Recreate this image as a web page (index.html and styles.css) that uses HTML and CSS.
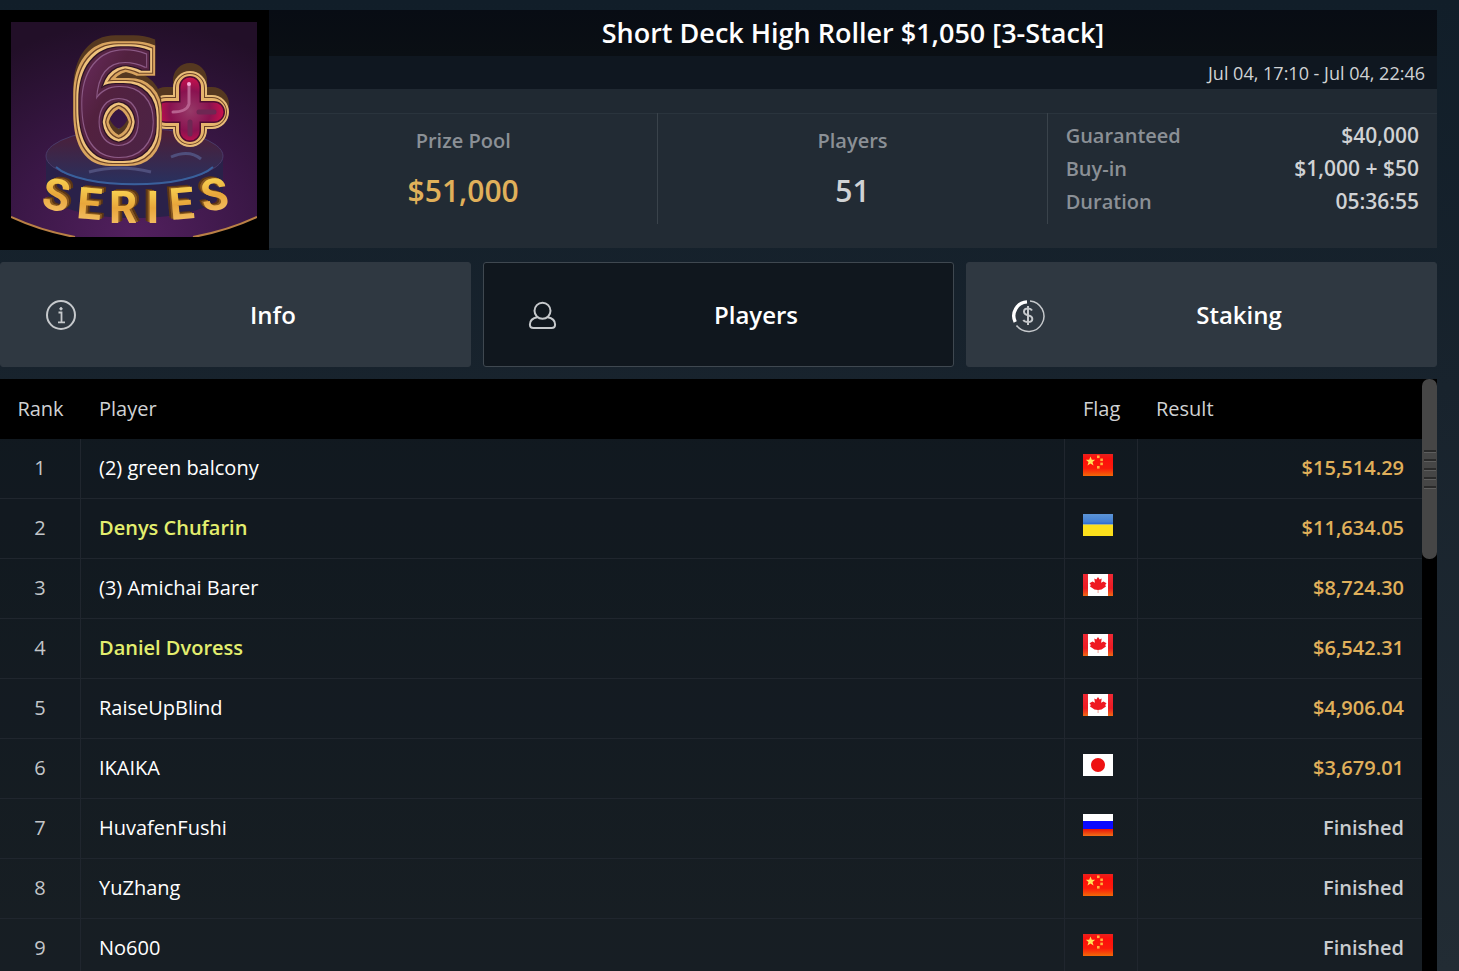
FILE: index.html
```html
<!DOCTYPE html>
<html lang="en">
<head>
    <meta charset="UTF-8">
    <meta name="viewport" content="width=device-width, initial-scale=1.0">
    <title>Short Deck High Roller</title>
    <link rel="stylesheet" href="styles.css">
</head>
<body>
    <!-- Shared flag drawings -->
    <svg class="defs" width="0" height="0" aria-hidden="true">
        <defs>
            <linearGradient id="cnRed" x1="0" y1="0" x2="0" y2="1">
                <stop offset="0" stop-color="#e8221c"/>
                <stop offset="0.2" stop-color="#fd0f0c"/>
                <stop offset="0.65" stop-color="#fc1a0a"/>
                <stop offset="1" stop-color="#f06a08"/>
            </linearGradient>
            <linearGradient id="caRed" x1="0" y1="0" x2="0" y2="1">
                <stop offset="0" stop-color="#ee2a35"/>
                <stop offset="0.65" stop-color="#ee1a22"/>
                <stop offset="1" stop-color="#ee6a14"/>
            </linearGradient>
            <linearGradient id="uaBlue" x1="0" y1="0" x2="0" y2="1">
                <stop offset="0" stop-color="#5c94d6"/>
                <stop offset="0.7" stop-color="#4380d4"/>
                <stop offset="1" stop-color="#1f5fd0"/>
            </linearGradient>
            <linearGradient id="ruRed" x1="0" y1="0" x2="0" y2="1">
                <stop offset="0" stop-color="#e81208"/>
                <stop offset="1" stop-color="#f07018"/>
            </linearGradient>
            <symbol id="flag-cn" viewBox="0 0 30 22">
                <rect width="30" height="22" fill="url(#cnRed)"/>
                <path d="M7.500 2.500l1.300 3.300h3.400L9.500 8l1 3.500-3-2-3 2 1-3.500L2.800 5.800h3.400z" fill="#ffe35a"/>
                <g fill="#ffb43c">
                    <rect x="14" y="1.500" width="2.600" height="2.600"/>
                    <rect x="17.300" y="4.500" width="2.600" height="2.600"/>
                    <rect x="17.300" y="8.600" width="2.600" height="2.600"/>
                    <rect x="14" y="12" width="2.600" height="2.600"/>
                </g>
            </symbol>
            <symbol id="flag-ua" viewBox="0 0 30 22">
                <rect width="30" height="11" fill="url(#uaBlue)"/>
                <rect y="11" width="30" height="11" fill="#fbdf1c"/>
                <rect y="10" width="30" height="1" fill="#a9b58c"/>
            </symbol>
            <symbol id="flag-ca" viewBox="0 0 30 22">
                <rect width="30" height="22" fill="#fff"/>
                <rect width="5" height="22" fill="url(#caRed)"/>
                <rect x="25" width="5" height="22" fill="url(#caRed)"/>
                <path d="M15 3l1.700 2.500 2-1-.6 4.200 2.400-1.200 3 1.700-1.300 1.900.8 1.300-4.500 3-3.500.6-3.500-.6-4.500-3 .8-1.300-1.300-1.900 3-1.700 2.400 1.200-.6-4.200 2 1z" fill="#ee1822"/>
                <rect x="14.500" y="16" width="1.200" height="3" fill="#f7b0a8"/>
            </symbol>
            <symbol id="flag-jp" viewBox="0 0 30 22">
                <rect width="30" height="22" fill="#fff"/>
                <circle cx="15" cy="11" r="7" fill="#ee1111"/>
            </symbol>
            <symbol id="flag-ru" viewBox="0 0 30 22">
                <rect width="30" height="8" fill="#fff"/>
                <rect y="7" width="30" height="8" fill="#0a0aff"/>
                <rect y="15" width="30" height="7" fill="url(#ruRed)"/>
            </symbol>
        </defs>
    </svg>

    <header class="event">
        <div class="event-logo">
            <svg viewBox="0 0 246 215" role="img" aria-label="6+ Series">
                <defs>
                    <radialGradient id="bg" cx="0.5" cy="1" r="1">
                        <stop offset="0" stop-color="#52205e"/>
                        <stop offset="0.5" stop-color="#3a1746"/>
                        <stop offset="1" stop-color="#220f28"/>
                    </radialGradient>
                    <linearGradient id="gold" x1="0" y1="0" x2="0" y2="1">
                        <stop offset="0" stop-color="#ffe45c"/>
                        <stop offset="0.5" stop-color="#e8a63a"/>
                        <stop offset="1" stop-color="#f8c877"/>
                    </linearGradient>
                    <linearGradient id="face" x1="0" y1="0" x2="1" y2="1">
                        <stop offset="0" stop-color="#74306c"/>
                        <stop offset="0.4" stop-color="#52213f"/>
                        <stop offset="1" stop-color="#4a2448"/>
                    </linearGradient>
                    <linearGradient id="top" x1="0" y1="0" x2="0" y2="1">
                        <stop offset="0" stop-color="#4f1d35"/>
                        <stop offset="1" stop-color="#28315f"/>
                    </linearGradient>
                    <radialGradient id="ruby" gradientUnits="userSpaceOnUse" cx="179" cy="89" r="34">
                        <stop offset="0" stop-color="#963a68"/>
                        <stop offset="0.6" stop-color="#8a1250"/>
                        <stop offset="1" stop-color="#cc0f4c"/>
                    </radialGradient>
                    <!-- Gold rims and a block of depth round the number -->
                    <filter id="rims" filterUnits="userSpaceOnUse" x="0" y="0" width="246" height="215" color-interpolation-filters="sRGB">
                        <feMorphology in="SourceAlpha" operator="dilate" radius="9" result="m9"/>
                        <feMorphology in="SourceAlpha" operator="dilate" radius="7" result="m7"/>
                        <feMorphology in="SourceAlpha" operator="dilate" radius="6" result="m6"/>
                        <feMorphology in="SourceAlpha" operator="dilate" radius="4" result="m4"/>
                        <feMorphology in="SourceAlpha" operator="dilate" radius="3" result="m3"/>
                        <feMorphology in="SourceAlpha" operator="dilate" radius="1" result="m1"/>
                        <feOffset in="m9" dy="-2" result="d1"/>
                        <feOffset in="m9" dy="-4" result="d2"/>
                        <feOffset in="m9" dy="-6" result="d3"/>
                        <feMerge result="depth">
                            <feMergeNode in="d3"/>
                            <feMergeNode in="d2"/>
                            <feMergeNode in="d1"/>
                        </feMerge>
                        <feFlood flood-color="#553820"/>
                        <feComposite in2="depth" operator="in" result="c0"/>
                        <feFlood flood-color="#d9a45f"/>
                        <feComposite in2="m9" operator="in" result="c9"/>
                        <feFlood flood-color="#6b4326"/>
                        <feComposite in2="m7" operator="in" result="c7"/>
                        <feFlood flood-color="#efc27c"/>
                        <feComposite in2="m6" operator="in" result="c6"/>
                        <feFlood flood-color="#2c1326"/>
                        <feComposite in2="m4" operator="in" result="c4"/>
                        <feFlood flood-color="#562443"/>
                        <feComposite in2="m3" operator="in" result="c3"/>
                        <feFlood flood-color="#8c5a86"/>
                        <feComposite in2="m1" operator="in" result="c1"/>
                        <feMerge>
                            <feMergeNode in="c0"/>
                            <feMergeNode in="c9"/>
                            <feMergeNode in="c7"/>
                            <feMergeNode in="c6"/>
                            <feMergeNode in="c4"/>
                            <feMergeNode in="c3"/>
                            <feMergeNode in="c1"/>
                            <feMergeNode in="SourceGraphic"/>
                        </feMerge>
                    </filter>
                    <filter id="depth" filterUnits="userSpaceOnUse" x="0" y="140" width="246" height="75">
                        <feDropShadow dx="2" dy="-1" stdDeviation="0" flood-color="#8a5a20"/>
                        <feDropShadow dx="2" dy="-1" stdDeviation="0" flood-color="#5a3414"/>
                    </filter>
                    <filter id="depthLeft" filterUnits="userSpaceOnUse" x="0" y="140" width="246" height="75">
                        <feDropShadow dx="-2" dy="-1" stdDeviation="0" flood-color="#8a5a20"/>
                        <feDropShadow dx="-2" dy="-1" stdDeviation="0" flood-color="#5a3414"/>
                    </filter>
                </defs>
                <rect width="246" height="215" fill="url(#bg)"/>
                <path d="M0 195Q30 209 64 215H0zM246 195Q216 209 182 215H246z" fill="#000"/>
                <path d="M0 195Q30 209 64 215M246 195Q216 209 182 215" fill="none" stroke="#b98045" stroke-width="2"/>

                <!-- Podium -->
                <path d="M35 134V166C35 206 212 206 212 166V134z" fill="#2a2149"/>
                <ellipse cx="123.500" cy="134" rx="88.500" ry="28" fill="url(#top)" stroke="#493a68"/>
                <path d="M45 145C70 168 177 168 202 145" fill="none" stroke="#39609c" stroke-width="2"/>
                <path d="M78 150Q108 142 140 150M160 135Q178 127 190 137" fill="none" stroke="#4f4f7c" stroke-width="3"/>

                <!-- Plus -->
                <g fill="none" stroke-linecap="round" stroke-linejoin="round">
                    <path d="M179 58V100M155 82H201" stroke="#553820" stroke-width="34"/>
                    <path d="M179 66V108M155 90H201" stroke="#e8bb78" stroke-width="34"/>
                    <path d="M179 66V108M155 90H201" stroke="#6b4326" stroke-width="30"/>
                    <path d="M179 66V108M155 90H201" stroke="#e6b46c" stroke-width="28"/>
                    <path d="M179 65V109M155 90H203" stroke="#4e0d32" stroke-width="22"/>
                    <path d="M179 65V109M155 90H203" stroke="url(#ruby)" stroke-width="19"/>
                    <path d="M178 63V82Q176 90 162 90" stroke="#b8618f" stroke-width="3"/>
                    <path d="M188 90H203M179 100V112" stroke="#6e2753" stroke-width="5"/>
                </g>
                <circle cx="178" cy="62" r="2" fill="#f7a8d8"/>

                <text class="logo-six" x="106" y="133" text-anchor="middle" fill="url(#face)" filter="url(#rims)">6</text>

                <!-- Lettering on the podium -->
                <g class="logo-series" text-anchor="middle" fill="url(#gold)">
                    <g filter="url(#depth)">
                        <text x="43" y="188" transform="rotate(9 43 188)">S</text>
                        <text x="77" y="197" transform="rotate(5 77 197)">E</text>
                        <text x="112" y="201">R</text>
                    </g>
                    <g filter="url(#depthLeft)">
                        <text x="142" y="201">I</text>
                        <text x="172" y="197" transform="rotate(-5 172 197)">E</text>
                        <text x="206" y="188" transform="rotate(-9 206 188)">S</text>
                    </g>
                </g>
            </svg>
        </div>
        <div class="event-body">
            <h1 class="event-title">Short Deck High Roller $1,050 [3-Stack]</h1>
            <div class="event-date">Jul 04, 17:10 - Jul 04, 22:46</div>
            <div class="event-stats">
                <div class="stat">
                    <div class="stat-label">Prize Pool</div>
                    <div class="stat-value money">$51,000</div>
                </div>
                <div class="stat">
                    <div class="stat-label">Players</div>
                    <div class="stat-value">51</div>
                </div>
                <dl class="details">
                    <div class="detail"><dt>Guaranteed</dt><dd>$40,000</dd></div>
                    <div class="detail"><dt>Buy-in</dt><dd>$1,000 + $50</dd></div>
                    <div class="detail"><dt>Duration</dt><dd>05:36:55</dd></div>
                </dl>
            </div>
        </div>
    </header>

    <nav class="tabs">
        <button type="button" class="tab">
            <svg class="tab-icon" viewBox="0 0 30 30" aria-hidden="true">
                <circle cx="15" cy="15" r="14" stroke-width="2"/>
                <path d="M12.500 12.500H15.500V22M12 22.300H19" stroke-width="1.800"/>
                <circle cx="15" cy="8.800" r="1.200" fill="#d5d7d9" stroke-width="1"/>
            </svg>
            <span class="tab-label">Info</span>
        </button>
        <button type="button" class="tab active">
            <svg class="tab-icon" viewBox="0 0 30 30" aria-hidden="true">
                <circle cx="13.500" cy="10.800" r="8" stroke-width="2"/>
                <path d="M8.500 17.300C3 18.300 .9 20.500 .9 24.500Q.9 28 4.500 28H22.500Q26.100 28 26.100 24.500C26.100 20.500 24 18.300 18.500 17.300" stroke-width="2"/>
            </svg>
            <span class="tab-label">Players</span>
        </button>
        <button type="button" class="tab">
            <svg class="tab-icon" viewBox="0 0 30 30" aria-hidden="true">
                <path d="M18 .9A15.300 15.300 0 1 1 4.500 25.500" stroke-width="1.500"/>
                <path d="M15 1.900A14 14 0 0 0 3.200 22" stroke-width="3.400" stroke="#fff"/>
                <path d="M20 10.500Q19 8.500 16 8.500Q12 8.500 12 11.500Q12 14.500 16 15.200Q20.300 16 20.300 19Q20.300 22 16 22Q12.500 22 11.300 20M16 6V25" stroke-width="2"/>
            </svg>
            <span class="tab-label">Staking</span>
        </button>
    </nav>

    <main class="list">
        <table class="players">
            <thead>
                <tr>
                    <th class="rank">Rank</th>
                    <th>Player</th>
                    <th class="flag">Flag</th>
                    <th class="result">Result</th>
                </tr>
            </thead>
            <tbody>
                <tr>
                    <td class="rank">1</td>
                    <td>(2) green balcony</td>
                    <td class="flag"><svg role="img" aria-label="China"><use href="#flag-cn"/></svg></td>
                    <td class="result money">$15,514.29</td>
                </tr>
                <tr>
                    <td class="rank">2</td>
                    <td class="known">Denys Chufarin</td>
                    <td class="flag"><svg role="img" aria-label="Ukraine"><use href="#flag-ua"/></svg></td>
                    <td class="result money">$11,634.05</td>
                </tr>
                <tr>
                    <td class="rank">3</td>
                    <td>(3) Amichai Barer</td>
                    <td class="flag"><svg role="img" aria-label="Canada"><use href="#flag-ca"/></svg></td>
                    <td class="result money">$8,724.30</td>
                </tr>
                <tr>
                    <td class="rank">4</td>
                    <td class="known">Daniel Dvoress</td>
                    <td class="flag"><svg role="img" aria-label="Canada"><use href="#flag-ca"/></svg></td>
                    <td class="result money">$6,542.31</td>
                </tr>
                <tr>
                    <td class="rank">5</td>
                    <td>RaiseUpBlind</td>
                    <td class="flag"><svg role="img" aria-label="Canada"><use href="#flag-ca"/></svg></td>
                    <td class="result money">$4,906.04</td>
                </tr>
                <tr>
                    <td class="rank">6</td>
                    <td>IKAIKA</td>
                    <td class="flag"><svg role="img" aria-label="Japan"><use href="#flag-jp"/></svg></td>
                    <td class="result money">$3,679.01</td>
                </tr>
                <tr>
                    <td class="rank">7</td>
                    <td>HuvafenFushi</td>
                    <td class="flag"><svg role="img" aria-label="Russia"><use href="#flag-ru"/></svg></td>
                    <td class="result">Finished</td>
                </tr>
                <tr>
                    <td class="rank">8</td>
                    <td>YuZhang</td>
                    <td class="flag"><svg role="img" aria-label="China"><use href="#flag-cn"/></svg></td>
                    <td class="result">Finished</td>
                </tr>
                <tr>
                    <td class="rank">9</td>
                    <td>No600</td>
                    <td class="flag"><svg role="img" aria-label="China"><use href="#flag-cn"/></svg></td>
                    <td class="result">Finished</td>
                </tr>
            </tbody>
        </table>
        <div class="scrollbar">
            <div class="thumb"><i></i><i></i><i></i><i></i><i></i></div>
        </div>
    </main>
</body>
</html>
```

FILE: styles.css
```css
* {
    box-sizing: border-box;
}
body {
    display: flex;
    flex-direction: column;
    gap: 12px;
    height: 100vh;
    margin: 0;
    padding: 10px 22px 0 0;
    overflow: hidden;
    background: linear-gradient(#111e29, #18232d 40%, #222c34);
    color: #d0d2d4;
    font-family: "Open Sans", "Noto Sans", sans-serif;
    font-size: 20px;
}
.defs {
    position: absolute;
}
.money {
    color: #e0b05a;
}

/* Event header */
.event {
    display: flex;
    align-items: flex-start;
    flex-shrink: 0;
}
.event-logo {
    flex-shrink: 0;
    width: 269px;
    height: 240px;
    padding: 12px 12px 13px 11px;
    background: #000;
}
.event-logo svg {
    display: block;
    width: 100%;
    height: 100%;
}
.logo-six {
    font: 400 140px "DejaVu Sans", sans-serif;
}
.logo-series {
    font: 700 44px Roboto, sans-serif;
}
.event-body {
    flex: 1;
    background: #202932;
}
.event-title {
    margin: 0;
    background: linear-gradient(#080c14, #0a0f14);
    color: #fff;
    font-size: 27px;
    font-weight: 600;
    line-height: 46px;
    text-align: center;
}
.event-date {
    padding: 1px 12px 0;
    background: #0f1720;
    font-size: 18px;
    line-height: 32px;
    text-align: right;
}
.event-stats {
    display: grid;
    grid-template-columns: repeat(3, 1fr);
    margin-top: 24px;
    padding-bottom: 24px;
    background: #222b34;
    box-shadow: inset 0 1px #2a343d;
    font-weight: 600;
}
.stat {
    height: 111px;
    padding-top: 13px;
    border-right: 1px solid #3a434b;
    text-align: center;
}
.stat-label,
.detail dt {
    color: #8b9096;
}
.stat-label {
    line-height: 30px;
}
.stat-value {
    margin-top: 15px;
    font-size: 30px;
    line-height: 40px;
}
.details {
    margin: 0;
    padding: 6px 18px 0;
}
.detail {
    display: flex;
    justify-content: space-between;
    line-height: 33px;
}
.detail dd {
    margin: 0;
    font-size: 21px;
}

/* Tabs */
.tabs {
    display: grid;
    grid-template-columns: repeat(3, 1fr);
    gap: 12px;
    flex-shrink: 0;
}
.tab {
    display: flex;
    align-items: center;
    height: 105px;
    padding: 0 0 0 45px;
    border: 1px solid #2f3841;
    border-radius: 3px;
    background: #2f3841;
    color: #fff;
    font: inherit;
    font-size: 24px;
    font-weight: 600;
    cursor: pointer;
}
.tab.active {
    border-color: #3f4850;
    background: #10171e;
}
.tab-icon {
    width: 30px;
    height: 30px;
    overflow: visible;
    fill: none;
    stroke: #c6c9cc;
}
.tab-label {
    flex: 1;
}

/* Player list */
.list {
    display: flex;
    flex: 1;
    min-height: 0;
}
.players {
    flex: 1;
    align-self: flex-start;
    border-collapse: separate;
    border-spacing: 0;
    table-layout: fixed;
    width: 100%;
}
.players th {
    height: 60px;
    padding: 0 18px 2px;
    background: #000;
    font-weight: 400;
    text-align: left;
}
.players td {
    height: 60px;
    padding: 0 18px 2px;
    border-right: 1px solid #20262e;
    border-bottom: 1px solid #20262e;
    background: rgba(0, 0, 0, 0.3);
    color: #fff;
}
.players td:last-child {
    border-right: 0;
}
.players .rank {
    width: 81px;
    padding: 0 0 2px;
    text-align: center;
}
.players .flag {
    width: 73px;
}
.players .result {
    width: 284px;
}
.players td.rank {
    color: #c3c6c9;
}
.players td.known {
    color: #e3ee6e;
    font-weight: 600;
}
.players td.result {
    color: #c9ccd0;
    font-weight: 600;
    text-align: right;
}
.players td.money {
    color: #e0b05a;
}
.flag svg {
    display: block;
    width: 30px;
    height: 22px;
    margin-bottom: 6px;
}
.scrollbar {
    flex-shrink: 0;
    width: 15px;
    background: #000;
}
.thumb {
    display: flex;
    flex-direction: column;
    align-items: center;
    justify-content: center;
    gap: 6px;
    height: 180px;
    border-radius: 7px;
    background: #464646;
}
.thumb i {
    width: 12px;
    height: 3px;
    border-top: 2px solid #2a2a2a;
    border-bottom: 1px solid #5e5e5e;
}
```
